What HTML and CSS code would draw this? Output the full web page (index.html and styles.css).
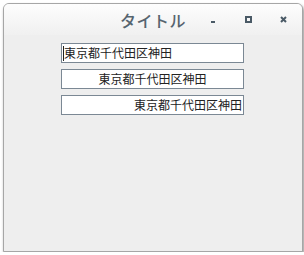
FILE: index.html
```html
<!DOCTYPE html>
<html lang="ja">
<head>
    <meta charset="UTF-8">
    <title>タイトル</title>
    <link rel="stylesheet" href="styles.css">
</head>
<body>

<div class="window">
    <!-- Title bar -->
    <div class="titlebar">
        <div></div>
        <div class="title">タイトル</div>
        <div class="controls">
            <span class="btn"><span class="min"></span></span>
            <span class="btn"><span class="max"></span></span>
            <span class="btn">
                <svg width="7" height="7" viewBox="0 0 7 7">
                    <path d="M1 1L6 6M6 1L1 6" stroke="#4a5a66" stroke-width="2" fill="none"/>
                </svg>
            </span>
        </div>
    </div>

    <!-- Fields -->
    <div class="content">
        <div class="field left"><span class="caret"></span>東京都千代田区神田</div>
        <div class="field center">東京都千代田区神田</div>
        <div class="field right">東京都千代田区神田</div>
    </div>
</div>

</body>
</html>
```

FILE: styles.css
```css
body {
    margin: 0;
    background: #ffffff;
    font-family: "Noto Sans CJK JP", "DejaVu Sans", sans-serif;
}
.window {
    margin: 3px 0 0 3px;
    width: 298px;
    height: 247px;
    border: 1px solid #a6a6a6;
    border-radius: 6px 6px 0 0;
    background: #eeeeee;
    box-shadow: 1px 2px 3px rgba(0, 0, 0, 0.45);
    overflow: hidden;
}
.titlebar {
    height: 31px;
    display: grid;
    grid-template-columns: 1fr auto 1fr;
    align-items: center;
    background: linear-gradient(to bottom, #fdfdfd, #f0f0f0);
}
.title {
    font-size: 16px;
    font-weight: 500;
    color: #56646f;
    letter-spacing: 0.5px;
}
.controls {
    display: flex;
    justify-content: flex-end;
    align-items: center;
    gap: 15px;
    padding-right: 9px;
}
.btn {
    width: 20px;
    height: 14px;
    display: flex;
    justify-content: center;
    align-items: center;
}
.min {
    width: 4px;
    height: 2px;
    margin-top: 5px;
    background: #4a5a66;
}
.max {
    width: 3px;
    height: 3px;
    border: 2px solid #4a5a66;
}
.content {
    display: flex;
    flex-direction: column;
    gap: 6px;
    padding: 8px 0 0 57px;
}
.field {
    width: 179px;
    height: 18px;
    border: 1px solid #7b8894;
    background: #ffffff;
    font-size: 12px;
    line-height: 18px;
    color: #222222;
    padding: 0 1px;
    box-sizing: content-box;
    white-space: nowrap;
}
.field.left {
    display: flex;
    align-items: center;
}
.field.center {
    text-align: center;
}
.field.right {
    text-align: right;
}
.caret {
    width: 1px;
    height: 15px;
    background: #222222;
}
```
